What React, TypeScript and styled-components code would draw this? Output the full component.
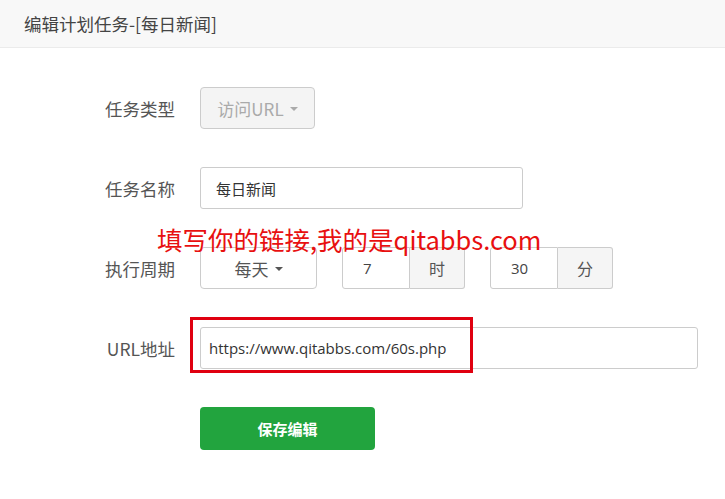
import styled, { createGlobalStyle } from "styled-components";

const GlobalStyle = createGlobalStyle`
  html, body {
    margin: 0;
    padding: 0;
    background: #fff;
  }
  body {
    font-family: "Noto Sans CJK SC", "Open Sans", sans-serif;
    color: #333;
  }
  * {
    box-sizing: border-box;
  }
`;

const Page = styled.div`
  width: 725px;
  min-height: 499px;
  background: #fff;
`;

const Header = styled.div`
  height: 48px;
  padding-left: 24px;
  background: #f8f8f8;
  border-bottom: 1px solid #ebebeb;
  font-size: 17.5px;
  line-height: 47px;
  color: #444;
`;

const Form = styled.form`
  position: relative;
  display: flex;
  flex-direction: column;
  gap: 38px;
  padding: 39px 27px 0 0;
`;

const Row = styled.div`
  display: grid;
  grid-template-columns: 175px 1fr;
  column-gap: 25px;
  align-items: center;
  height: 42px;
`;

const Label = styled.label`
  text-align: right;
  font-size: 17.5px;
  color: #555;
`;

const Controls = styled.div<{ $max?: number }>`
  position: relative;
  display: flex;
  align-items: center;
  gap: 25px;
  height: 42px;
  max-width: ${(p) => (p.$max ? `${p.$max}px` : "none")};
`;

const SelectBtn = styled.button<{ $width: number; $disabled?: boolean }>`
  display: flex;
  align-items: center;
  justify-content: center;
  gap: 6px;
  width: ${(p) => p.$width}px;
  height: 42px;
  padding: 0;
  border: 1px solid #ccc;
  border-radius: 4px;
  background: ${(p) => (p.$disabled ? "#f4f4f4" : "#fff")};
  color: ${(p) => (p.$disabled ? "#aaa" : "#555")};
  font-family: "Noto Sans CJK SC", sans-serif;
  font-size: 17px;
`;

const Caret = styled.span`
  display: inline-block;
  width: 0;
  height: 0;
  margin-top: 2px;
  border-left: 4px solid transparent;
  border-right: 4px solid transparent;
  border-top: 4px solid currentColor;
`;

const TextInput = styled.input<{ $pad: number; $font?: string; $size: number }>`
  flex: 1;
  height: 42px;
  padding: 0 ${(p) => p.$pad}px;
  border: 1px solid #ccc;
  border-radius: 3px;
  background: #fff;
  color: #333;
  font-family: ${(p) => p.$font ?? `"Noto Sans CJK SC", sans-serif`};
  font-size: ${(p) => p.$size}px;
  outline: none;
`;

const InputGroup = styled.div`
  display: flex;
  height: 42px;
`;

const GroupInput = styled.input`
  width: 68px;
  height: 42px;
  padding: 0 0 0 20px;
  border: 1px solid #ccc;
  border-radius: 3px 0 0 3px;
  background: #fff;
  color: #444;
  font-family: "Open Sans", sans-serif;
  font-size: 15px;
  outline: none;
`;

const Addon = styled.span`
  display: flex;
  align-items: center;
  justify-content: center;
  width: 55px;
  height: 42px;
  border: 1px solid #ccc;
  border-left: none;
  border-radius: 0 3px 3px 0;
  background: #f5f5f5;
  color: #555;
  font-size: 16px;
`;

const Note = styled.div`
  position: absolute;
  top: 177px;
  left: 157px;
  font-size: 25.5px;
  line-height: 1.1;
  color: #e81010;
  white-space: nowrap;
  pointer-events: none;
`;

const Highlight = styled.div`
  position: absolute;
  top: -10px;
  left: -10px;
  width: 283px;
  height: 56px;
  border: 3px solid #e00010;
  pointer-events: none;
`;

const SaveButton = styled.button`
  width: 175px;
  height: 43px;
  border: none;
  border-radius: 4px;
  background: #22a43e;
  color: #fff;
  font-family: "Noto Sans CJK SC", sans-serif;
  font-size: 15px;
  font-weight: 700;
`;

const Spacer = styled.span``;

export default function App() {
  return (
    <Page>
      <GlobalStyle />
      <Header>编辑计划任务-[每日新闻]</Header>
      <Form onSubmit={(e) => e.preventDefault()}>
        <Row>
          <Label>任务类型</Label>
          <Controls>
            <SelectBtn type="button" $width={115} $disabled>
              访问URL <Caret />
            </SelectBtn>
          </Controls>
        </Row>
        <Row>
          <Label>任务名称</Label>
          <Controls $max={323}>
            <TextInput $pad={15} $size={15} defaultValue="每日新闻" />
          </Controls>
        </Row>
        <Row>
          <Label>执行周期</Label>
          <Controls>
            <SelectBtn type="button" $width={117}>
              每天 <Caret />
            </SelectBtn>
            <InputGroup>
              <GroupInput defaultValue="7" />
              <Addon>时</Addon>
            </InputGroup>
            <InputGroup>
              <GroupInput defaultValue="30" />
              <Addon>分</Addon>
            </InputGroup>
          </Controls>
        </Row>
        <Row>
          <Label>URL地址</Label>
          <Controls>
            <TextInput
              $pad={8}
              $size={15}
              $font={`"Open Sans", sans-serif`}
              defaultValue="https://www.qitabbs.com/60s.php"
            />
            <Highlight />
          </Controls>
        </Row>
        <Row>
          <Spacer />
          <Controls>
            <SaveButton type="submit">保存编辑</SaveButton>
          </Controls>
        </Row>
        <Note>填写你的链接,我的是qitabbs.com</Note>
      </Form>
    </Page>
  );
}
